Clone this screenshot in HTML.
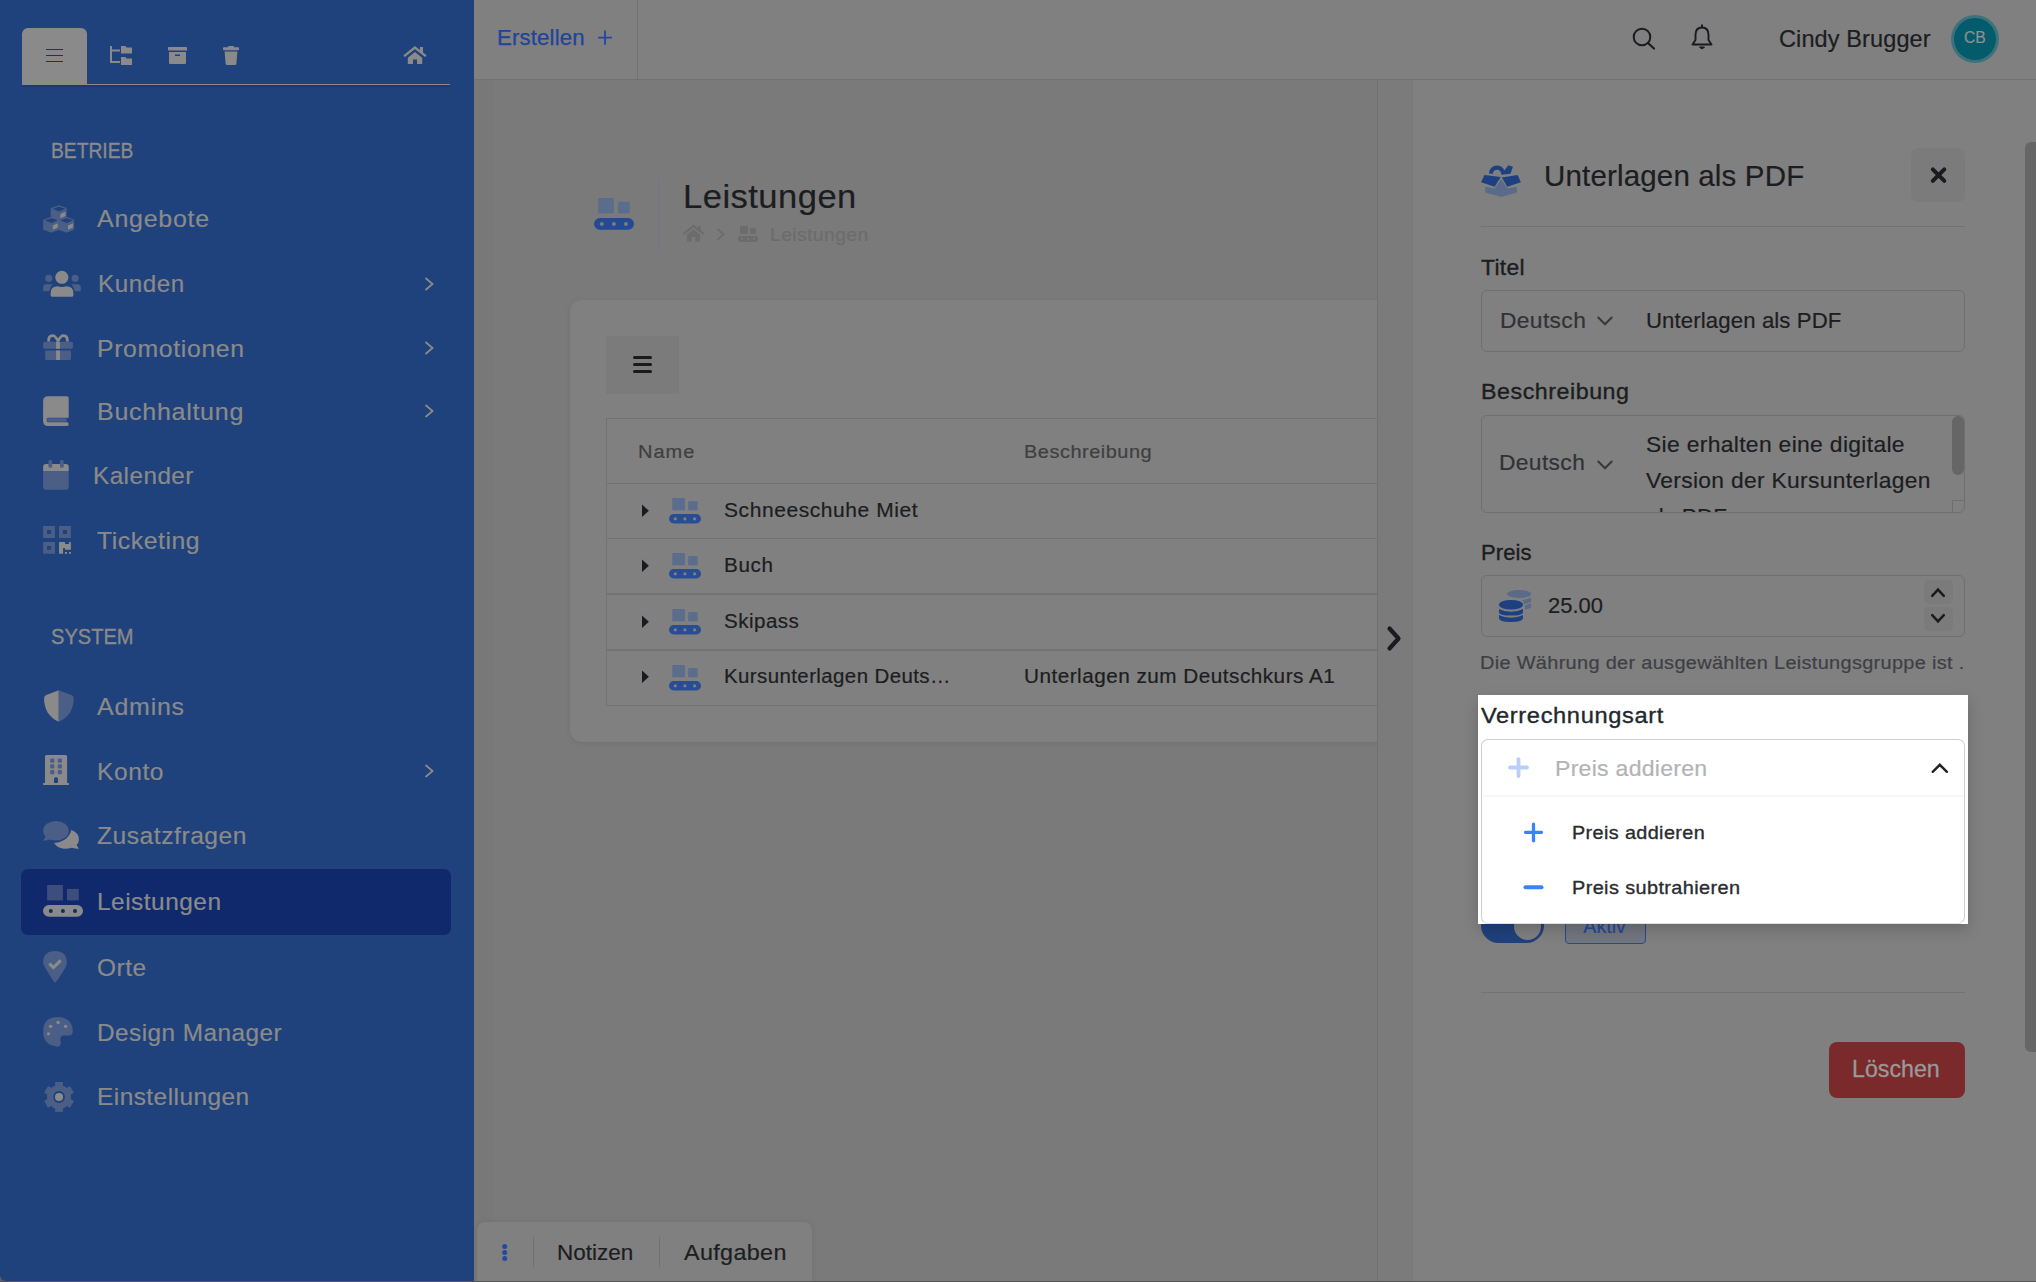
<!DOCTYPE html>
<html><head><meta charset="utf-8">
<style>
html,body{margin:0;padding:0;width:2036px;height:1282px;overflow:hidden;background:#7b7b7b;font-family:"Liberation Sans",sans-serif;}
.a{position:absolute;}
.tx{position:absolute;white-space:pre;line-height:1;}
svg{position:absolute;overflow:visible;}
</style></head><body>
<!-- main background -->
<div class="a" style="left:474px;top:80px;width:903px;height:1202px;background:#7a7a7a"></div>
<div class="a" style="left:474px;top:80px;width:18.5px;height:1202px;background:#787878"></div>
<!-- sidebar -->
<div class="a" style="left:0;top:1272px;width:10px;height:10px;background:#5e5e5e"></div>
<div class="a" style="left:0;top:0;width:474px;height:1281px;background:#1f417c;border-bottom-left-radius:6px"></div>
<!-- toolbar tab -->
<div class="a" style="left:22px;top:28px;width:65px;height:57px;background:#8a8a8a;border-radius:6px 6px 0 0"></div>
<div class="a" style="left:22px;top:83.5px;width:428px;height:1.8px;background:#8a8a8a"></div>
<div class="a" style="left:22px;top:85.3px;width:428px;height:1.5px;background:#1c3a6e"></div>
<!-- hamburger in tab -->
<div class="a" style="left:46px;top:48.8px;width:17px;height:1.7px;background:#0e3c55"></div>
<div class="a" style="left:46px;top:54.8px;width:17px;height:1.7px;background:#0e3c55"></div>
<div class="a" style="left:46px;top:60.7px;width:17px;height:1.7px;background:#0e3c55"></div>
<!-- active menu item -->
<div class="a" style="left:21px;top:869px;width:430px;height:65.5px;background:#10296c;border-radius:7px"></div>

<!-- top bar -->
<div class="a" style="left:474px;top:0;width:1562px;height:79px;background:#808080;border-bottom:1.2px solid #717171"></div>
<div class="a" style="left:636.8px;top:0;width:1.2px;height:79px;background:#737373"></div>
<!-- avatar -->
<div class="a" style="left:1951px;top:15px;width:48px;height:48px;border-radius:50%;background:#3c727b"></div>
<div class="a" style="left:1954px;top:18px;width:42px;height:42px;border-radius:50%;background:#035b6b"></div>

<!-- page header divider -->
<div class="a" style="left:658px;top:178px;width:1.2px;height:74px;background:#6f7785"></div>

<!-- card -->
<div class="a" style="left:570px;top:300px;width:900px;height:442px;background:#808080;border-radius:12px;box-shadow:0 1px 6px rgba(0,0,0,0.08)"></div>
<div class="a" style="left:606px;top:336px;width:73px;height:58px;background:#7b7b7b"></div>
<div class="a" style="left:633px;top:356.4px;width:19px;height:3px;background:#1a1a1c;border-radius:2px"></div>
<div class="a" style="left:633px;top:362.9px;width:19px;height:3px;background:#1a1a1c;border-radius:2px"></div>
<div class="a" style="left:633px;top:369.5px;width:19px;height:3px;background:#1a1a1c;border-radius:2px"></div>
<!-- table -->
<div class="a" style="left:606px;top:418px;width:900px;height:288px;border:1.2px solid #737373;box-sizing:border-box"></div>
<div class="a" style="left:606px;top:483px;width:800px;height:1.2px;background:#737373"></div>
<div class="a" style="left:606px;top:538.3px;width:800px;height:1.2px;background:#737373"></div>
<div class="a" style="left:606px;top:593.4px;width:800px;height:1.2px;background:#737373"></div>
<div class="a" style="left:606px;top:649.4px;width:800px;height:1.2px;background:#737373"></div>

<!-- bottom notes bar -->
<div class="a" style="left:477px;top:1222px;width:335px;height:70px;background:#808080;border-radius:8px 8px 0 0;box-shadow:0 0 6px rgba(0,0,0,0.08)"></div>
<div class="a" style="left:532.6px;top:1237px;width:1.2px;height:29.5px;background:#707070"></div>
<div class="a" style="left:658.9px;top:1237px;width:1.2px;height:29.5px;background:#707070"></div>

<!-- right panel -->
<div class="a" style="left:1377px;top:80px;width:659px;height:1202px;background:#808080"></div>
<div class="a" style="left:1377px;top:80px;width:36px;height:1202px;background:#7b7b7b"></div>
<div class="a" style="left:1376.6px;top:80px;width:1.6px;height:1202px;background:#707070"></div>
<!-- panel scrollbar thumb -->
<div class="a" style="left:2025px;top:142px;width:11px;height:910px;background:#666;border-radius:6px 0 0 6px"></div>
<!-- close button -->
<div class="a" style="left:1911px;top:148px;width:54px;height:54px;background:#7b7b7b;border-radius:7px"></div>
<!-- header separator -->
<div class="a" style="left:1481px;top:226px;width:484px;height:1.2px;background:#737373"></div>
<!-- Titel input -->
<div class="a" style="left:1481px;top:289.5px;width:484px;height:62px;border:1.2px solid #6f6f6f;border-radius:6px;box-sizing:border-box"></div>
<!-- Beschreibung textarea -->
<div class="a" style="left:1481px;top:414.5px;width:484px;height:98px;border:1.2px solid #6f6f6f;border-radius:6px;box-sizing:border-box;overflow:hidden"></div>
<div class="a" style="left:1952px;top:416px;width:11.5px;height:59px;background:#666;border-radius:6px"></div>
<div class="a" style="left:1951.5px;top:500px;width:12px;height:11.5px;border-left:1px solid #6f6f6f;border-top:1px solid #6f6f6f;box-sizing:border-box"></div>
<!-- Preis input -->
<div class="a" style="left:1481px;top:574.5px;width:484px;height:62px;border:1.2px solid #6f6f6f;border-radius:6px;box-sizing:border-box"></div>
<div class="a" style="left:1923.5px;top:580px;width:29.5px;height:23.5px;background:#7b7b7b;border-radius:5px"></div>
<div class="a" style="left:1923.5px;top:607px;width:29.5px;height:24px;background:#7b7b7b;border-radius:5px"></div>
<!-- bottom separator -->
<div class="a" style="left:1481px;top:991.7px;width:484px;height:1.2px;background:#737373"></div>
<!-- delete button -->
<div class="a" style="left:1829px;top:1042px;width:136px;height:56px;background:#7a2a2b;border-radius:8px"></div>
<!-- toggle -->
<div class="a" style="left:1481px;top:908px;width:63px;height:35px;background:#1f417c;border-radius:18px"></div>
<div class="a" style="left:1514px;top:913px;width:27px;height:27px;background:#808080;border-radius:50%"></div>
<!-- Aktiv badge -->
<div class="a" style="left:1565px;top:900px;width:80.5px;height:44px;background:#72777f;border:1.4px solid #2a4a8f;border-radius:4px;box-sizing:border-box"></div>

<div class="tx" style="left:50.5px;top:140.8px;font-size:21.51px;color:#8a8a8a;letter-spacing:0.00px;transform:scaleX(0.8957);transform-origin:0 0;-webkit-text-stroke:0.35px currentColor">BETRIEB</div>
<div class="tx" style="left:50.5px;top:627.4px;font-size:21.51px;color:#8a8a8a;letter-spacing:0.00px;transform:scaleX(0.9332);transform-origin:0 0;-webkit-text-stroke:0.35px currentColor">SYSTEM</div>
<div class="tx" style="left:97.3px;top:208.1px;font-size:23.11px;color:#8a8a8a;letter-spacing:0.70px;transform:scaleX(1.0797);transform-origin:0 0;-webkit-text-stroke:0.2px currentColor">Angebote</div>
<div class="tx" style="left:97.5px;top:273.3px;font-size:23.11px;color:#8a8a8a;letter-spacing:0.50px;transform:scaleX(1.0490);transform-origin:0 0;-webkit-text-stroke:0.2px currentColor">Kunden</div>
<div class="tx" style="left:96.8px;top:338.2px;font-size:23.11px;color:#8a8a8a;letter-spacing:0.60px;transform:scaleX(1.0731);transform-origin:0 0;-webkit-text-stroke:0.2px currentColor">Promotionen</div>
<div class="tx" style="left:96.8px;top:401.2px;font-size:23.11px;color:#8a8a8a;letter-spacing:0.66px;transform:scaleX(1.0831);transform-origin:0 0;-webkit-text-stroke:0.2px currentColor">Buchhaltung</div>
<div class="tx" style="left:93.0px;top:464.7px;font-size:23.11px;color:#8a8a8a;letter-spacing:0.43px;transform:scaleX(1.0511);transform-origin:0 0;-webkit-text-stroke:0.2px currentColor">Kalender</div>
<div class="tx" style="left:96.8px;top:529.6px;font-size:23.11px;color:#8a8a8a;letter-spacing:0.51px;transform:scaleX(1.0719);transform-origin:0 0;-webkit-text-stroke:0.2px currentColor">Ticketing</div>
<div class="tx" style="left:96.8px;top:695.6px;font-size:23.11px;color:#8a8a8a;letter-spacing:0.74px;transform:scaleX(1.0782);transform-origin:0 0;-webkit-text-stroke:0.2px currentColor">Admins</div>
<div class="tx" style="left:96.8px;top:760.5px;font-size:23.11px;color:#8a8a8a;letter-spacing:0.57px;transform:scaleX(1.0595);transform-origin:0 0;-webkit-text-stroke:0.2px currentColor">Konto</div>
<div class="tx" style="left:96.8px;top:824.6px;font-size:23.11px;color:#8a8a8a;letter-spacing:0.50px;transform:scaleX(1.0650);transform-origin:0 0;-webkit-text-stroke:0.2px currentColor">Zusatzfragen</div>
<div class="tx" style="left:96.8px;top:890.8px;font-size:23.11px;color:#8a8a8a;letter-spacing:0.46px;transform:scaleX(1.0580);transform-origin:0 0;-webkit-text-stroke:0.2px currentColor">Leistungen</div>
<div class="tx" style="left:96.8px;top:956.8px;font-size:23.11px;color:#8a8a8a;letter-spacing:0.54px;transform:scaleX(1.0567);transform-origin:0 0;-webkit-text-stroke:0.2px currentColor">Orte</div>
<div class="tx" style="left:96.8px;top:1021.6px;font-size:23.11px;color:#8a8a8a;letter-spacing:0.44px;transform:scaleX(1.0539);transform-origin:0 0;-webkit-text-stroke:0.2px currentColor">Design Manager</div>
<div class="tx" style="left:96.8px;top:1086.4px;font-size:23.11px;color:#8a8a8a;letter-spacing:0.42px;transform:scaleX(1.0581);transform-origin:0 0;-webkit-text-stroke:0.2px currentColor">Einstellungen</div>
<div class="tx" style="left:497.3px;top:26.6px;font-size:21.8px;color:#21449a;letter-spacing:0.14px;transform:scaleX(1.0197);transform-origin:0 0;-webkit-text-stroke:0.25px currentColor">Erstellen</div>
<div class="tx" style="left:1779.0px;top:27.8px;font-size:23.26px;color:#1c1d20;letter-spacing:0.10px;transform:scaleX(1.0120);transform-origin:0 0;-webkit-text-stroke:0.2px currentColor">Cindy Brugger</div>
<div class="tx" style="left:1964.2px;top:30.2px;font-size:15.99px;color:#8e9091;letter-spacing:0.00px;transform:scaleX(0.9812);transform-origin:0 0;-webkit-text-stroke:0.2px currentColor">CB</div>
<div class="tx" style="left:682.6px;top:180.3px;font-size:33.28px;color:#1c1d20;letter-spacing:0.45px;transform:scaleX(1.0391);transform-origin:0 0;-webkit-text-stroke:0.2px currentColor">Leistungen</div>
<div class="tx" style="left:769.7px;top:225.5px;font-size:18.17px;color:#6c6c6c;letter-spacing:0.39px;transform:scaleX(1.0632);transform-origin:0 0;-webkit-text-stroke:0.2px currentColor">Leistungen</div>
<div class="tx" style="left:638.2px;top:442.5px;font-size:18.46px;color:#3f3f3f;letter-spacing:0.87px;transform:scaleX(1.0868);transform-origin:0 0;-webkit-text-stroke:0.2px currentColor">Name</div>
<div class="tx" style="left:1023.9px;top:442.5px;font-size:18.46px;color:#3f3f3f;letter-spacing:0.50px;transform:scaleX(1.0796);transform-origin:0 0;-webkit-text-stroke:0.2px currentColor">Beschreibung</div>
<div class="tx" style="left:724.3px;top:500.6px;font-size:19.33px;color:#1c1d20;letter-spacing:0.55px;transform:scaleX(1.0846);transform-origin:0 0;-webkit-text-stroke:0.2px currentColor">Schneeschuhe Miet</div>
<div class="tx" style="left:724.3px;top:556.4px;font-size:19.33px;color:#1c1d20;letter-spacing:0.63px;transform:scaleX(1.0686);transform-origin:0 0;-webkit-text-stroke:0.2px currentColor">Buch</div>
<div class="tx" style="left:724.3px;top:611.9px;font-size:19.33px;color:#1c1d20;letter-spacing:0.45px;transform:scaleX(1.0639);transform-origin:0 0;-webkit-text-stroke:0.2px currentColor">Skipass</div>
<div class="tx" style="left:724.3px;top:667.3px;font-size:19.33px;color:#1c1d20;letter-spacing:0.38px;transform:scaleX(1.0588);transform-origin:0 0;-webkit-text-stroke:0.2px currentColor">Kursunterlagen Deuts…</div>
<div class="tx" style="left:1023.8px;top:667.3px;font-size:19.33px;color:#1c1d20;letter-spacing:0.45px;transform:scaleX(1.0726);transform-origin:0 0;-webkit-text-stroke:0.2px currentColor">Unterlagen zum Deutschkurs A1</div>
<div class="tx" style="left:1544.0px;top:162.3px;font-size:29.07px;color:#1c1d20;letter-spacing:0.15px;transform:scaleX(1.0158);transform-origin:0 0;-webkit-text-stroke:0.2px currentColor">Unterlagen als PDF</div>
<div class="tx" style="left:1481.0px;top:256.8px;font-size:21.8px;color:#1c1d20;letter-spacing:0.30px;transform:scaleX(1.0464);transform-origin:0 0;-webkit-text-stroke:0.35px currentColor">Titel</div>
<div class="tx" style="left:1499.7px;top:309.8px;font-size:21.8px;color:#313236;letter-spacing:0.37px;transform:scaleX(1.0438);transform-origin:0 0;-webkit-text-stroke:0.2px currentColor">Deutsch</div>
<div class="tx" style="left:1646.4px;top:309.8px;font-size:21.8px;color:#1c1d20;letter-spacing:0.12px;transform:scaleX(1.0164);transform-origin:0 0;-webkit-text-stroke:0.2px currentColor">Unterlagen als PDF</div>
<div class="tx" style="left:1480.5px;top:381.1px;font-size:21.8px;color:#1c1d20;letter-spacing:0.50px;transform:scaleX(1.0662);transform-origin:0 0;-webkit-text-stroke:0.35px currentColor">Beschreibung</div>
<div class="tx" style="left:1499.3px;top:452.2px;font-size:21.8px;color:#313236;letter-spacing:0.37px;transform:scaleX(1.0438);transform-origin:0 0;-webkit-text-stroke:0.2px currentColor">Deutsch</div>
<div class="tx" style="left:1480.5px;top:542.1px;font-size:21.8px;color:#1c1d20;letter-spacing:0.09px;transform:scaleX(1.0112);transform-origin:0 0;-webkit-text-stroke:0.35px currentColor">Preis</div>
<div class="tx" style="left:1547.5px;top:594.0px;font-size:22.67px;color:#1c1d20;letter-spacing:0.00px;transform:scaleX(0.9682);transform-origin:0 0;-webkit-text-stroke:0.2px currentColor">25.00</div>
<div class="tx" style="left:1480.2px;top:654.0px;font-size:18.9px;color:#3e3f44;letter-spacing:0.31px;transform:scaleX(1.0543);transform-origin:0 0;-webkit-text-stroke:0.2px currentColor">Die Währung der ausgewählten Leistungsgruppe ist .</div>
<div class="tx" style="left:1852.3px;top:1056.9px;font-size:24.27px;color:#999;letter-spacing:0.00px;transform:scaleX(0.9569);transform-origin:0 0;-webkit-text-stroke:0.3px currentColor">Löschen</div>
<div class="tx" style="left:1583.3px;top:916.5px;font-size:19.62px;color:#25489a;letter-spacing:0.00px;-webkit-text-stroke:0.2px currentColor">Aktiv</div>
<div class="tx" style="left:557.4px;top:1242.4px;font-size:22.53px;color:#1c1d20;letter-spacing:0.00px;transform:scaleX(0.9981);transform-origin:0 0;-webkit-text-stroke:0.2px currentColor">Notizen</div>
<div class="tx" style="left:684.3px;top:1242.4px;font-size:22.53px;color:#1c1d20;letter-spacing:0.33px;transform:scaleX(1.0373);transform-origin:0 0;-webkit-text-stroke:0.2px currentColor">Aufgaben</div>
<div class="a" style="left:1481px;top:414.5px;width:468px;height:97px;overflow:hidden"><div class="tx" style="left:165.1px;top:19.2px;font-size:21.8px;color:#1c1d20;letter-spacing:0.30px;transform:scaleX(1.0502);transform-origin:0 0;-webkit-text-stroke:0.2px currentColor">Sie erhalten eine digitale</div>
<div class="tx" style="left:165.1px;top:55.2px;font-size:21.8px;color:#1c1d20;letter-spacing:0.31px;transform:scaleX(1.0462);transform-origin:0 0;-webkit-text-stroke:0.2px currentColor">Version der Kursunterlagen</div>
<div class="tx" style="left:165.1px;top:91.2px;font-size:21.8px;color:#1c1d20;letter-spacing:0.23px;transform:scaleX(1.0270);transform-origin:0 0;-webkit-text-stroke:0.2px currentColor">als PDF</div></div>
<svg style="left:40px;top:200px" width="50" height="40" viewBox="0 0 1602 1282"><polygon points="345,260 610,170 855,260 855,580 610,680 345,580" fill="#4a5e86"/><polygon points="410,280 610,215 810,280 610,365" fill="#1f417c"/><polygon points="655,450 815,375 815,510 655,585" fill="#8a8a8a"/><polygon points="100,630 365,540 610,630 610,950 365,1050 100,950" fill="#4a5e86"/><polygon points="165,650 365,585 565,650 365,735" fill="#1f417c"/><polygon points="410,820 570,745 570,880 410,955" fill="#8a8a8a"/><polygon points="585,630 850,540 1095,630 1095,950 850,1050 585,950" fill="#4a5e86"/><polygon points="650,650 850,585 1050,650 850,735" fill="#1f417c"/><polygon points="895,820 1055,745 1055,880 895,955" fill="#8a8a8a"/></svg>
<svg style="left:40px;top:264px" width="50" height="40" viewBox="0 0 1602 1282"><circle cx="700" cy="425" r="210" fill="#8a8a8a"/><path d="M340,1000 L340,930 Q340,710 560,710 Q700,760 840,710 Q1070,710 1070,930 L1070,1000 Q1070,1050 1020,1050 L390,1050 Q340,1050 340,1000 Z" fill="#8a8a8a"/><circle cx="280" cy="460" r="115" fill="#4a5e86"/><circle cx="1125" cy="460" r="115" fill="#4a5e86"/><path d="M100,870 L100,760 Q100,650 210,650 L410,650 Q330,720 300,870 Z" fill="#4a5e86"/><path d="M1310,870 L1310,760 Q1310,650 1200,650 L1000,650 Q1080,720 1110,870 Z" fill="#4a5e86"/></svg>
<svg style="left:40px;top:328px" width="40" height="40" viewBox="0 0 1282 1282"><rect x="100" y="440" width="955" height="225" rx="50" fill="#4a5e86"/><path d="M165,720 L995,720 L995,975 Q995,1025 945,1025 L215,1025 Q165,1025 165,975 Z" fill="#4a5e86"/><rect x="515" y="440" width="125" height="225" fill="#8a8a8a"/><rect x="515" y="720" width="125" height="305" fill="#8a8a8a"/><path d="M230,430 Q220,190 420,200 Q480,200 578,330 Q675,200 735,200 Q935,190 925,430 L830,430 Q850,290 740,290 Q690,290 612,440 L543,440 Q465,290 415,290 Q305,290 325,430 Z" fill="#8a8a8a"/></svg>
<svg style="left:40px;top:390px" width="40" height="40" viewBox="0 0 1282 1282"><path d="M100,1000 L100,360 Q100,200 260,200 L860,200 Q920,200 920,260 L920,890 L260,890 Q210,890 210,960 Q210,1030 260,1030 L870,1030 Q920,1030 920,1090 Q920,1150 870,1150 L260,1150 Q100,1150 100,1000 Z" fill="#8a8a8a"/><rect x="220" y="905" width="640" height="115" rx="50" fill="#4a5e86"/></svg>
<svg style="left:40px;top:455px" width="40" height="40" viewBox="0 0 1282 1282"><path d="M100,510 L100,380 Q100,290 190,290 L830,290 Q920,290 920,380 L920,510 Z" fill="#8a8a8a"/><path d="M100,510 L920,510 L920,1030 Q920,1110 840,1110 L180,1110 Q100,1110 100,1030 Z" fill="#4a5e86"/><rect x="270" y="160" width="120" height="250" rx="40" fill="#4a5e86"/><rect x="640" y="160" width="120" height="250" rx="40" fill="#4a5e86"/></svg>
<svg style="left:40px;top:520px" width="40" height="40" viewBox="0 0 1282 1282"><path fill-rule="evenodd" fill="#4a5e86" d="M100,195 H480 V575 H100 Z M225,320 V445 H355 V320 Z M610,195 H990 V575 H610 Z M735,320 V445 H865 V320 Z M100,705 H480 V1085 H100 Z M225,830 V955 H355 V830 Z"/><path fill="#8a8a8a" d="M610,705 L800,705 L800,770 L930,770 L930,705 L990,705 L990,955 L800,955 L800,895 L740,895 L740,1085 L610,1085 Z"/><rect x="800" y="1025" width="65" height="60" fill="#8a8a8a"/><rect x="930" y="1025" width="60" height="60" fill="#8a8a8a"/></svg>
<svg style="left:40px;top:685px" width="40" height="40" viewBox="0 0 1282 1282"><path d="M600,165 L600,1180 Q380,1080 240,870 Q130,680 130,420 Q130,350 200,320 Z" fill="#8a8a8a"/><path d="M600,165 L1010,320 Q1080,350 1080,420 Q1080,680 970,870 Q830,1080 600,1180 Z" fill="#4a5e86"/></svg>
<svg style="left:40px;top:750px" width="40" height="40" viewBox="0 0 1282 1282"><path d="M160,1060 L160,210 Q160,160 210,160 L820,160 Q870,160 870,210 L870,1060 L930,1060 L930,1120 L100,1120 L100,1060 Z" fill="#8a8a8a"/><rect x="325" y="272" width="135" height="135" rx="30" fill="#4a5e86"/><rect x="325" y="458" width="135" height="135" rx="30" fill="#4a5e86"/><rect x="325" y="640" width="135" height="135" rx="30" fill="#4a5e86"/><rect x="568" y="272" width="135" height="135" rx="30" fill="#4a5e86"/><rect x="568" y="458" width="135" height="135" rx="30" fill="#4a5e86"/><rect x="568" y="640" width="135" height="135" rx="30" fill="#4a5e86"/><path d="M450,1060 L450,920 Q450,870 500,870 L525,870 Q575,870 575,920 L575,1060 Z" fill="#1f417c"/></svg>
<svg style="left:40px;top:815px" width="50" height="40" viewBox="0 0 1602 1282"><ellipse cx="510" cy="505" rx="410" ry="315" fill="#4a5e86"/><path d="M190,660 L100,825 Q240,820 360,770 Z" fill="#4a5e86"/><path d="M1000,480 Q1250,560 1245,800 Q1240,920 1170,960 L1250,1080 Q1100,1080 1020,1050 Q900,1090 760,1085 Q550,1060 450,900 Q800,880 950,620 Q990,550 1000,480 Z" fill="#8a8a8a"/></svg>
<svg style="left:43px;top:885px" width="40.0" height="32.0" viewBox="0 0 40 32"><rect x="4.1" y="0" width="15.8" height="15.4" fill="#3e4e7c"/><rect x="24" y="3.9" width="11.8" height="11.5" fill="#3e4e7c"/><rect x="0" y="20" width="40" height="11.8" rx="5.9" fill="#8a8a8a"/><circle cx="7.8" cy="26" r="2" fill="#10296c"/><circle cx="19.9" cy="26" r="2" fill="#10296c"/><circle cx="32" cy="26" r="2" fill="#10296c"/></svg>
<svg style="left:40px;top:948px" width="40" height="40" viewBox="0 0 1282 1282"><path d="M480,1110 Q430,1080 200,690 Q100,520 100,470 Q100,95 480,95 Q860,95 860,470 Q860,560 760,720 Q540,1080 480,1110 Z" fill="#4a5e86"/><polyline points="300,500 430,630 665,395" fill="none" stroke="#8a8a8a" stroke-width="100"/></svg>
<svg style="left:40px;top:1012px" width="40" height="40" viewBox="0 0 1282 1282"><path d="M570,1110 Q100,1080 100,620 Q100,160 580,160 Q1050,180 1050,640 Q1050,750 930,750 L760,750 Q650,760 650,870 Q680,960 660,1040 Q640,1110 570,1110 Z" fill="#4a5e86"/><circle cx="580" cy="335" r="55" fill="#8a8a8a"/><circle cx="340" cy="460" r="55" fill="#8a8a8a"/><circle cx="820" cy="460" r="55" fill="#8a8a8a"/><circle cx="270" cy="700" r="52" fill="#8a8a8a"/></svg>
<svg style="left:40px;top:1077px" width="40" height="40" viewBox="0 0 1282 1282"><rect x="485" y="160" width="250" height="960" fill="#4a5e86" transform="rotate(0 610 640)"/><rect x="485" y="160" width="250" height="960" fill="#4a5e86" transform="rotate(60 610 640)"/><rect x="485" y="160" width="250" height="960" fill="#4a5e86" transform="rotate(120 610 640)"/><circle cx="610" cy="640" r="385" fill="#4a5e86"/><circle cx="610" cy="640" r="190" fill="#1f417c"/><circle cx="610" cy="640" r="130" fill="#8a8a8a"/></svg>
<svg style="left:423.5px;top:277px" width="11" height="14" viewBox="0 0 11 14"><polyline points="1.5,1 8.5,7 1.5,13" fill="none" stroke="#8a8a8a" stroke-width="1.8"/></svg>
<svg style="left:423.5px;top:341px" width="11" height="14" viewBox="0 0 11 14"><polyline points="1.5,1 8.5,7 1.5,13" fill="none" stroke="#8a8a8a" stroke-width="1.8"/></svg>
<svg style="left:423.5px;top:404px" width="11" height="14" viewBox="0 0 11 14"><polyline points="1.5,1 8.5,7 1.5,13" fill="none" stroke="#8a8a8a" stroke-width="1.8"/></svg>
<svg style="left:423.5px;top:764px" width="11" height="14" viewBox="0 0 11 14"><polyline points="1.5,1 8.5,7 1.5,13" fill="none" stroke="#8a8a8a" stroke-width="1.8"/></svg>
<svg style="left:0px;top:0px" width="474" height="90" viewBox="0 0 474 90"><path d="M111,46 V62 H120 M111,50.5 H120" fill="none" stroke="#8a8a8a" stroke-width="2"/><path d="M121,46 H125.5 L126.5,47.5 H132 V53.5 H121 Z M121,57 H125.5 L126.5,58.5 H132 V65 H121 Z" fill="#8a8a8a"/></svg>
<svg style="left:0px;top:0px" width="474" height="90" viewBox="0 0 474 90"><rect x="168" y="47" width="19" height="3.6" rx="0.6" fill="#8a8a8a"/><path fill-rule="evenodd" d="M169,52 H186 V63 Q186,64 185,64 H170 Q169,64 169,63 Z M175,54.5 V56 H180 V54.5 Z" fill="#8a8a8a"/><rect x="223" y="47.3" width="16" height="3" rx="0.8" fill="#8a8a8a"/><rect x="228" y="46" width="6" height="2" rx="0.8" fill="#8a8a8a"/><path d="M224.6,51.5 H237.4 L236.4,63.5 Q236.3,65 234.8,65 H227.2 Q225.7,65 225.6,63.5 Z" fill="#8a8a8a"/><polyline points="404.8,55.6 414.9,47.6 425.2,55.6" fill="none" stroke="#8a8a8a" stroke-width="2.4" stroke-linecap="round"/><rect x="420" y="47" width="3" height="5.5" fill="#8a8a8a"/><path d="M407.8,57.8 L414.9,52 L422.2,57.8 V64 H417 V59.5 H413 V64 H407.8 Z" fill="#8a8a8a"/></svg>
<svg style="left:595px;top:27px" width="20" height="20" viewBox="0 0 20 20"><path d="M3,10.6 H17 M10,3.4 V17.8" stroke="#24489e" stroke-width="1.8" fill="none"/></svg>
<svg style="left:1630px;top:25px" width="28" height="28" viewBox="0 0 28 28"><circle cx="12" cy="12" r="8.3" fill="none" stroke="#1a1b1e" stroke-width="2"/><line x1="18" y1="18" x2="24" y2="23.5" stroke="#1a1b1e" stroke-width="2.2" stroke-linecap="round"/></svg>
<svg style="left:1689px;top:23px" width="26" height="28" viewBox="0 0 26 28"><path d="M13,4.5 Q6.5,4.5 6.5,12 V17 L3.5,21.5 H22.5 L19.5,17 V12 Q19.5,4.5 13,4.5 Z" fill="none" stroke="#1a1b1e" stroke-width="1.9" stroke-linejoin="round"/><line x1="13" y1="1.5" x2="13" y2="4.5" stroke="#1a1b1e" stroke-width="2"/><path d="M10.5,24 Q13,27.5 15.5,24 Z" fill="#1a1b1e" stroke="#1a1b1e" stroke-width="1"/></svg>
<svg style="left:594px;top:198.2px" width="40.0" height="32.0" viewBox="0 0 40 32"><rect x="4.1" y="0" width="15.8" height="15.4" fill="#5b6d8d"/><rect x="24" y="3.9" width="11.8" height="11.5" fill="#5b6d8d"/><rect x="0" y="20" width="40" height="11.8" rx="5.9" fill="#244a96"/><circle cx="7.8" cy="26" r="2" fill="#7a7a7a"/><circle cx="19.9" cy="26" r="2" fill="#7a7a7a"/><circle cx="32" cy="26" r="2" fill="#7a7a7a"/></svg>
<svg style="left:683px;top:225px" width="21" height="17" viewBox="0 0 21 17"><polyline points="1,8.5 10.5,1 20,8.5" fill="none" stroke="#6c6c6c" stroke-width="2.2" stroke-linecap="round"/><rect x="15" y="1" width="2.6" height="5" fill="#6c6c6c"/><path d="M4,9.5 L10.5,4.4 L17,9.5 V16.5 H12.3 V12 H8.7 V16.5 H4 Z" fill="#6c6c6c"/></svg>
<svg style="left:716px;top:228px" width="10" height="13" viewBox="0 0 10 13"><polyline points="1.5,1 7.5,6.3 1.5,11.6" fill="none" stroke="#6c6c6c" stroke-width="1.8"/></svg>
<svg style="left:738px;top:226.2px" width="20.0" height="16.0" viewBox="0 0 40 32"><rect x="4.1" y="0" width="15.8" height="15.4" fill="#6c6c6c"/><rect x="24" y="3.9" width="11.8" height="11.5" fill="#6c6c6c"/><rect x="0" y="20" width="40" height="11.8" rx="5.9" fill="#6c6c6c"/><circle cx="7.8" cy="26" r="2" fill="#7a7a7a"/><circle cx="19.9" cy="26" r="2" fill="#7a7a7a"/><circle cx="32" cy="26" r="2" fill="#7a7a7a"/></svg>
<svg style="left:641px;top:503.7px" width="10" height="14" viewBox="0 0 10 14"><path d="M1,0.6 L7.9,6.85 L1,13.1 Z" fill="#1a1b1e"/></svg>
<svg style="left:669px;top:497.9px" width="32.0" height="25.6" viewBox="0 0 40 32"><rect x="4.1" y="0" width="15.8" height="15.4" fill="#5b6d8d"/><rect x="24" y="3.9" width="11.8" height="11.5" fill="#5b6d8d"/><rect x="0" y="20" width="40" height="11.8" rx="5.9" fill="#284d94"/><circle cx="7.8" cy="26" r="2" fill="#808080"/><circle cx="19.9" cy="26" r="2" fill="#808080"/><circle cx="32" cy="26" r="2" fill="#808080"/></svg>
<svg style="left:641px;top:559.0px" width="10" height="14" viewBox="0 0 10 14"><path d="M1,0.6 L7.9,6.85 L1,13.1 Z" fill="#1a1b1e"/></svg>
<svg style="left:669px;top:553.2px" width="32.0" height="25.6" viewBox="0 0 40 32"><rect x="4.1" y="0" width="15.8" height="15.4" fill="#5b6d8d"/><rect x="24" y="3.9" width="11.8" height="11.5" fill="#5b6d8d"/><rect x="0" y="20" width="40" height="11.8" rx="5.9" fill="#284d94"/><circle cx="7.8" cy="26" r="2" fill="#808080"/><circle cx="19.9" cy="26" r="2" fill="#808080"/><circle cx="32" cy="26" r="2" fill="#808080"/></svg>
<svg style="left:641px;top:614.5px" width="10" height="14" viewBox="0 0 10 14"><path d="M1,0.6 L7.9,6.85 L1,13.1 Z" fill="#1a1b1e"/></svg>
<svg style="left:669px;top:608.7px" width="32.0" height="25.6" viewBox="0 0 40 32"><rect x="4.1" y="0" width="15.8" height="15.4" fill="#5b6d8d"/><rect x="24" y="3.9" width="11.8" height="11.5" fill="#5b6d8d"/><rect x="0" y="20" width="40" height="11.8" rx="5.9" fill="#284d94"/><circle cx="7.8" cy="26" r="2" fill="#808080"/><circle cx="19.9" cy="26" r="2" fill="#808080"/><circle cx="32" cy="26" r="2" fill="#808080"/></svg>
<svg style="left:641px;top:670.4499999999999px" width="10" height="14" viewBox="0 0 10 14"><path d="M1,0.6 L7.9,6.85 L1,13.1 Z" fill="#1a1b1e"/></svg>
<svg style="left:669px;top:664.65px" width="32.0" height="25.6" viewBox="0 0 40 32"><rect x="4.1" y="0" width="15.8" height="15.4" fill="#5b6d8d"/><rect x="24" y="3.9" width="11.8" height="11.5" fill="#5b6d8d"/><rect x="0" y="20" width="40" height="11.8" rx="5.9" fill="#284d94"/><circle cx="7.8" cy="26" r="2" fill="#808080"/><circle cx="19.9" cy="26" r="2" fill="#808080"/><circle cx="32" cy="26" r="2" fill="#808080"/></svg>
<svg style="left:1384px;top:624px" width="20" height="30" viewBox="0 0 20 30"><polyline points="5.5,4.5 14.5,14.5 5.5,24.5" fill="none" stroke="#1a1b1e" stroke-width="4.2" stroke-linecap="round" stroke-linejoin="round"/></svg>
<svg style="left:1476px;top:156px" width="50" height="46" viewBox="0 0 1393 1282"><polygon points="255,860 520,905 700,640 870,905 1140,860 1140,1020 700,1140 255,1020" fill="#5a6a89"/><polygon points="140,735 235,530 690,585 520,855" fill="#1e4080"/><polygon points="720,600 1160,530 1250,735 870,855" fill="#1e4080"/><path d="M360,490 A225,225 0 0 1 810,490 L700,500 A115,115 0 0 0 470,495 Z" fill="#1e4080"/><polygon points="700,520 900,255 1030,300 960,495" fill="#1e4080"/></svg>
<svg style="left:1926px;top:163px" width="25" height="25" viewBox="0 0 25 25"><path d="M6.8,6.3 L18.3,17.9 M18.3,6.3 L6.8,17.9" stroke="#1a1b1e" stroke-width="4" stroke-linecap="round"/></svg>
<svg style="left:1596px;top:314px" width="18" height="14" viewBox="0 0 18 14"><polyline points="2.3,3.6 9,10.3 15.7,3.6" fill="none" stroke="#38393d" stroke-width="2.1" stroke-linecap="round"/></svg>
<svg style="left:1596px;top:457.5px" width="18" height="14" viewBox="0 0 18 14"><polyline points="2.3,3.6 9,10.3 15.7,3.6" fill="none" stroke="#38393d" stroke-width="2.1" stroke-linecap="round"/></svg>
<svg style="left:1494px;top:584px" width="44" height="44" viewBox="0 0 1282 1282"><ellipse cx="730" cy="290" rx="350" ry="115" fill="#5a6a89"/><path d="M810,470 Q1000,440 1080,390 L1080,520 Q1000,560 870,590 L870,540 Q860,490 810,470 Z" fill="#5a6a89"/><path d="M900,620 Q1000,600 1080,560 L1080,690 Q1000,730 900,740 Z" fill="#5a6a89"/><ellipse cx="495" cy="605" rx="350" ry="140" fill="#1e4080"/><path d="M145,730 Q300,810 495,810 Q690,810 845,730 L845,820 Q845,920 495,920 Q145,920 145,820 Z" fill="#1e4080"/><path d="M145,905 Q300,985 495,985 Q690,985 845,905 L845,990 Q845,1105 495,1105 Q145,1105 145,990 Z" fill="#1e4080"/></svg>
<svg style="left:1930px;top:585px" width="16" height="14" viewBox="0 0 16 14"><polyline points="2.2,10.8 8,4.6 13.8,10.8" fill="none" stroke="#1a1b1e" stroke-width="2.5" stroke-linecap="round"/></svg>
<svg style="left:1930px;top:612px" width="16" height="14" viewBox="0 0 16 14"><polyline points="2.2,3.2 8,9.4 13.8,3.2" fill="none" stroke="#1a1b1e" stroke-width="2.5" stroke-linecap="round"/></svg>
<svg style="left:500px;top:1243px" width="10" height="20" viewBox="0 0 10 20"><circle cx="4.7" cy="3.6" r="2.5" fill="#2548a0"/><circle cx="4.7" cy="9.6" r="2.5" fill="#2548a0"/><circle cx="4.7" cy="15.6" r="2.5" fill="#2548a0"/></svg>

<!-- spotlight -->
<div class="a" style="left:1478px;top:695px;width:490px;height:229px;background:#fff;box-shadow:0 6px 14px rgba(0,0,0,0.18)"></div>
<div class="a" style="left:1481px;top:738.5px;width:484px;height:185px;border:1.2px solid #cfcfcf;border-bottom-color:#e0e0e0;border-radius:7px;box-sizing:border-box"></div>
<div class="a" style="left:1482.5px;top:795px;width:481px;height:2px;background:#f6f6f6"></div>

<div class="tx" style="left:1480.5px;top:704.6px;font-size:21.8px;color:#23282d;letter-spacing:0.59px;transform:scaleX(1.0835);transform-origin:0 0;-webkit-text-stroke:0.35px currentColor">Verrechnungsart</div>
<div class="tx" style="left:1555.0px;top:757.6px;font-size:22.24px;color:#b3b3b3;letter-spacing:0.26px;transform:scaleX(1.0369);transform-origin:0 0;-webkit-text-stroke:0.2px currentColor">Preis addieren</div>
<div class="tx" style="left:1571.7px;top:823.8px;font-size:18.6px;color:#2a2c30;letter-spacing:0.37px;transform:scaleX(1.0640);transform-origin:0 0;-webkit-text-stroke:0.35px currentColor">Preis addieren</div>
<div class="tx" style="left:1571.7px;top:879.1px;font-size:18.6px;color:#2a2c30;letter-spacing:0.38px;transform:scaleX(1.0680);transform-origin:0 0;-webkit-text-stroke:0.35px currentColor">Preis subtrahieren</div>
<svg style="left:1505px;top:754px" width="27" height="27" viewBox="0 0 27 27"><path d="M5,13.5 H22 M13.5,5.2 V22" stroke="#b9cff7" stroke-width="3.8" stroke-linecap="round"/></svg>
<svg style="left:1928px;top:760px" width="24" height="16" viewBox="0 0 24 16"><polyline points="4.7,11.8 11.8,4.8 18.9,11.8" fill="none" stroke="#222326" stroke-width="2.4" stroke-linecap="round"/></svg>
<svg style="left:1521px;top:820px" width="24" height="24" viewBox="0 0 24 24"><path d="M4.5,12.3 H20.5 M12.5,4.2 V20.8" stroke="#3b82f6" stroke-width="3.3" stroke-linecap="round"/></svg>
<svg style="left:1521px;top:875px" width="24" height="24" viewBox="0 0 24 24"><path d="M4.5,12.3 H20.5" stroke="#3b82f6" stroke-width="4" stroke-linecap="round"/></svg>
<div class="a" style="left:0;top:1281px;width:2036px;height:1px;background:#545454"></div>

</body></html>
